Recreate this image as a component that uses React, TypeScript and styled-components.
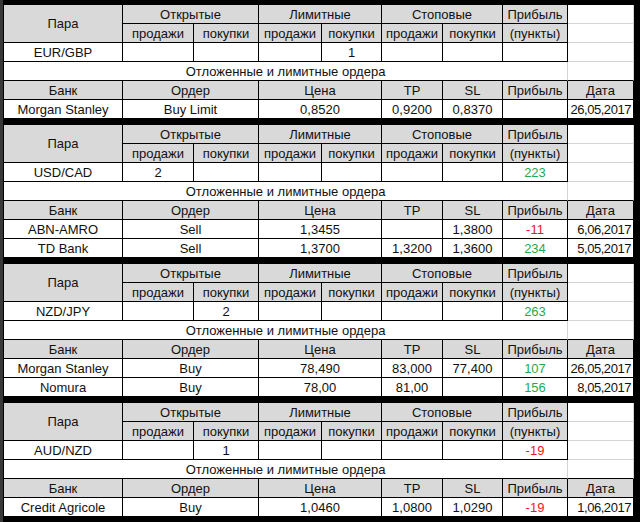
import React from "react";
import styled, { createGlobalStyle } from "styled-components";

const Global = createGlobalStyle`
  html, body { margin: 0; padding: 0; background: #000; }
  body { font-family: "Liberation Sans", Arial, sans-serif; }
`;

const Sheet = styled.div`
  width: 640px;
  height: 522px;
  box-sizing: border-box;
  background: #000;
  border-left: 3px solid #383838;
  padding: 5px 6px 5px 1px;
  display: flex;
  flex-direction: column;
  gap: 6px;
`;

const Block = styled.div`
  display: grid;
  grid-template-columns: 119px 71px 65px 63px 60px 61px 60px 65px 66px;
  grid-auto-rows: 19px;
  background: #fff;
`;

type Tone = "head" | "plain" | "blank";
const LIGHT = "#d4d4d4";

const Cell = styled.div<{
  $tone?: Tone;
  $span?: number;
  $rows?: number;
  $align?: "center" | "right";
  $lightR?: boolean;
  $lightB?: boolean;
  $color?: string;
  $tight?: boolean;
}>`
  box-sizing: border-box;
  grid-column: span ${(p) => p.$span ?? 1};
  grid-row: span ${(p) => p.$rows ?? 1};
  background: ${(p) => (p.$tone === "head" ? "#d9d9d9" : "#fff")};
  border-right: 1px solid ${(p) => (p.$lightR ? LIGHT : "#000")};
  border-bottom: 1px solid ${(p) => (p.$lightB ? LIGHT : "#000")};
  display: flex;
  align-items: center;
  justify-content: ${(p) => (p.$align === "right" ? "flex-end" : "center")};
  padding: ${(p) => (p.$align === "right" ? "1px 2px 0 0" : "1px 0 0 0")};
  font-size: 13px;
  line-height: 16px;
  color: ${(p) => p.$color ?? "#111"};
  letter-spacing: ${(p) => (p.$tight ? "-0.45px" : "0")};
  white-space: nowrap;
  overflow: hidden;
`;

const GREEN = "#1faa4c";
const RED = "#f0141e";

type Profit = { v: string; c?: string };
type Order = {
  bank: string;
  order: string;
  price: string;
  tp: string;
  sl: string;
  profit: Profit;
  date: string;
};
type Pair = {
  pair: string;
  vals: string[];
  profit: Profit;
  orders: Order[];
};

const data: Pair[] = [
  {
    pair: "EUR/GBP",
    vals: ["", "", "", "1", "", ""],
    profit: { v: "" },
    orders: [
      {
        bank: "Morgan Stanley",
        order: "Buy Limit",
        price: "0,8520",
        tp: "0,9200",
        sl: "0,8370",
        profit: { v: "" },
        date: "26,05,2017",
      },
    ],
  },
  {
    pair: "USD/CAD",
    vals: ["2", "", "", "", "", ""],
    profit: { v: "223", c: GREEN },
    orders: [
      {
        bank: "ABN-AMRO",
        order: "Sell",
        price: "1,3455",
        tp: "",
        sl: "1,3800",
        profit: { v: "-11", c: RED },
        date: "6,06,2017",
      },
      {
        bank: "TD Bank",
        order: "Sell",
        price: "1,3700",
        tp: "1,3200",
        sl: "1,3600",
        profit: { v: "234", c: GREEN },
        date: "5,05,2017",
      },
    ],
  },
  {
    pair: "NZD/JPY",
    vals: ["", "2", "", "", "", ""],
    profit: { v: "263", c: GREEN },
    orders: [
      {
        bank: "Morgan Stanley",
        order: "Buy",
        price: "78,490",
        tp: "83,000",
        sl: "77,400",
        profit: { v: "107", c: GREEN },
        date: "26,05,2017",
      },
      {
        bank: "Nomura",
        order: "Buy",
        price: "78,00",
        tp: "81,00",
        sl: "",
        profit: { v: "156", c: GREEN },
        date: "8,05,2017",
      },
    ],
  },
  {
    pair: "AUD/NZD",
    vals: ["", "1", "", "", "", ""],
    profit: { v: "-19", c: RED },
    orders: [
      {
        bank: "Credit Agricole",
        order: "Buy",
        price: "1,0460",
        tp: "1,0800",
        sl: "1,0290",
        profit: { v: "-19", c: RED },
        date: "1,06,2017",
      },
    ],
  },
];

const sub = ["продажи", "покупки", "продажи", "покупки", "продажи", "покупки"];

function PairBlock({ d }: { d: Pair }) {
  return (
    <Block>
      <Cell $tone="head" $rows={2}>Пара</Cell>
      <Cell $tone="head" $span={2}>Открытые</Cell>
      <Cell $tone="head" $span={2}>Лимитные</Cell>
      <Cell $tone="head" $span={2}>Стоповые</Cell>
      <Cell $tone="head">Прибыль</Cell>
      <Cell $tone="blank" $lightR $lightB />
      {sub.map((s, i) => (
        <Cell key={i} $tone="head">{s}</Cell>
      ))}
      <Cell $tone="head">(пункты)</Cell>
      <Cell $tone="blank" $lightR $lightB />

      <Cell>{d.pair}</Cell>
      {d.vals.map((v, i) => (
        <Cell key={i}>{v}</Cell>
      ))}
      <Cell $color={d.profit.c}>{d.profit.v}</Cell>
      <Cell $tone="blank" $lightR $lightB />

      <Cell $span={8} $lightR>Отложенные и лимитные ордера</Cell>
      <Cell $tone="blank" $lightR />

      <Cell $tone="head">Банк</Cell>
      <Cell $tone="head" $span={2}>Ордер</Cell>
      <Cell $tone="head" $span={2}>Цена</Cell>
      <Cell $tone="head">TP</Cell>
      <Cell $tone="head">SL</Cell>
      <Cell $tone="head">Прибыль</Cell>
      <Cell $tone="head">Дата</Cell>

      {d.orders.map((o, i) => (
        <React.Fragment key={i}>
          <Cell>{o.bank}</Cell>
          <Cell $span={2}>{o.order}</Cell>
          <Cell $span={2}>{o.price}</Cell>
          <Cell>{o.tp}</Cell>
          <Cell>{o.sl}</Cell>
          <Cell $color={o.profit.c}>{o.profit.v}</Cell>
          <Cell $align="right" $tight>{o.date}</Cell>
        </React.Fragment>
      ))}
    </Block>
  );
}

export default function App() {
  return (
    <>
      <Global />
      <Sheet>
        {data.map((d) => (
          <PairBlock key={d.pair} d={d} />
        ))}
      </Sheet>
    </>
  );
}
